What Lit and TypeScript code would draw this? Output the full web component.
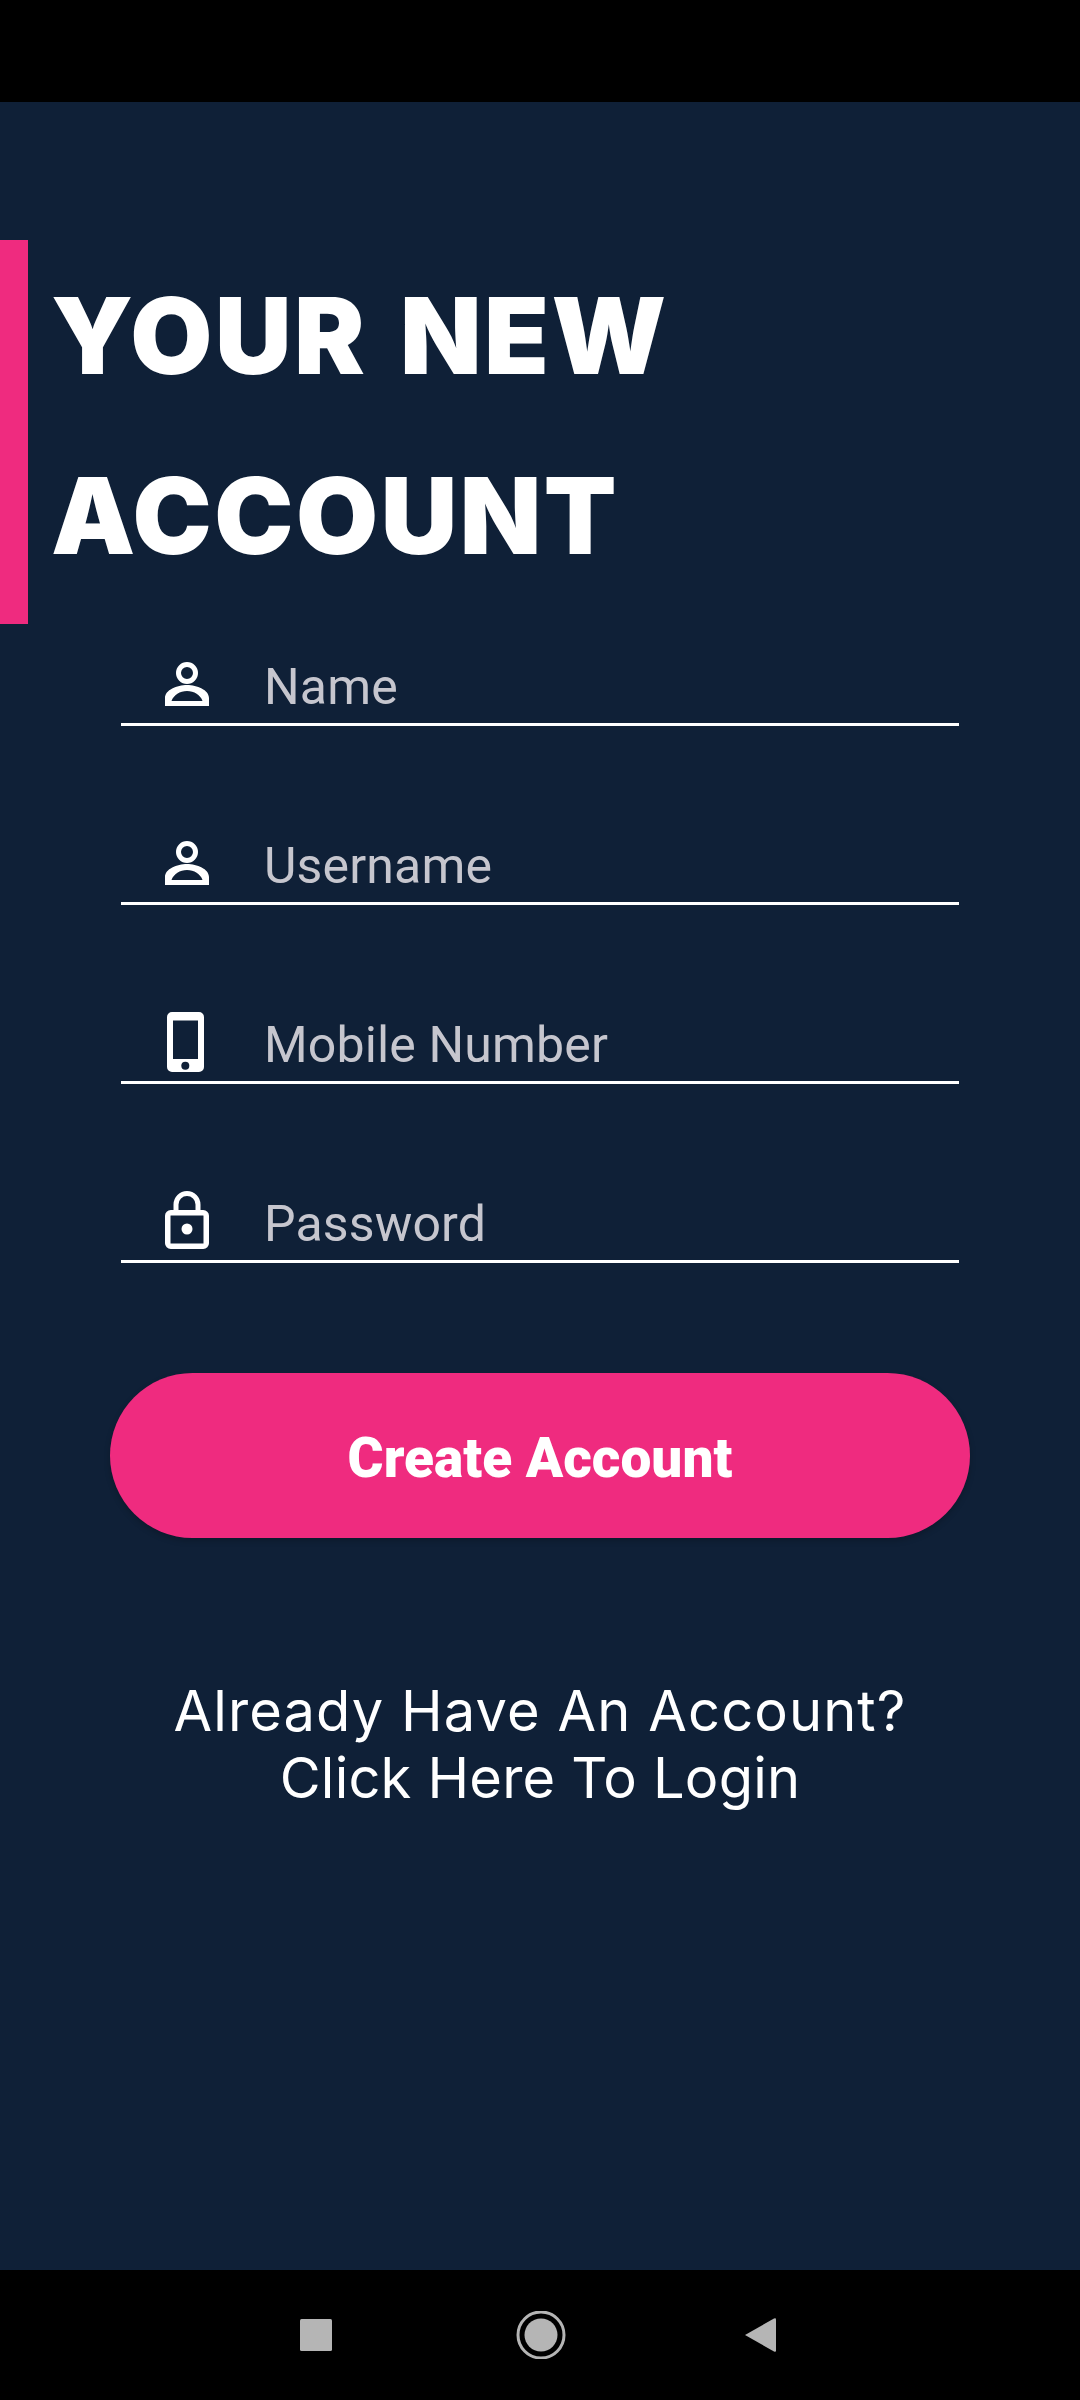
import { LitElement, html, css, svg } from "lit";
import { customElement } from "lit/decorators.js";

const personIcon = html`<svg class="icon" width="44" height="44" viewBox="0 0 44 44">
  <circle cx="22" cy="11" r="8.5" fill="none" stroke="#fff" stroke-width="5" />
  <path
    fill="#fff"
    fill-rule="evenodd"
    d="M0 44V36C0 28 12 23 22 23C32 23 44 28 44 36V44ZM6.500 39H37.500C35.500 33 29 29 22 29C15 29 8.500 33 6.500 39Z"
  />
</svg>`;

const phoneIcon = html`<svg class="icon" width="37" height="60" viewBox="0 0 37 60">
  <path
    fill="#fff"
    fill-rule="evenodd"
    d="M5 0H32A5 5 0 0 1 37 5V55A5 5 0 0 1 32 60H5A5 5 0 0 1 0 55V5A5 5 0 0 1 5 0ZM6 8.500V47H31V8.500Z"
  />
  <circle cx="18.300" cy="53.700" r="4" fill="#0f2037" />
</svg>`;

const lockIcon = html`<svg class="icon" width="44" height="58" viewBox="0 0 44 58">
  <path d="M11 20V13.500A11 11 0 0 1 33 13.500V20" fill="none" stroke="#fff" stroke-width="5" />
  <rect x="2.750" y="21.750" width="38.500" height="33.500" rx="3" fill="none" stroke="#fff" stroke-width="5.500" />
  <circle cx="22" cy="38" r="5.500" fill="#fff" />
</svg>`;

const navIcons = svg`
  <rect x="0" y="8" width="32" height="32" rx="1.500" fill="#b5b5b5" />
  <circle cx="241" cy="24" r="23" fill="none" stroke="#b5b5b5" stroke-width="3" />
  <circle cx="241" cy="24" r="16.500" fill="#b5b5b5" />
  <path d="M445 24L474 7.500Q476 6.500 476 8.500V39.500Q476 41.500 474 40.500Z" fill="#b5b5b5" />
`;

@customElement("app-root")
export class AppRoot extends LitElement {
  static styles = css`
    * {
      box-sizing: border-box;
    }

    :host {
      display: block;
    }

    .screen {
      display: flex;
      flex-direction: column;
      height: 2400px;
      background: #0f2037;
      font-family: Roboto, sans-serif;
    }

    .status-bar {
      height: 102px;
      background: #000;
    }

    main {
      flex: 1;
      padding-top: 138px;
    }

    .heading {
      height: 384px;
      margin: 0;
      padding: 6px 0 0 23px;
      border-left: 28px solid #ef2b7f;
      font-family: Inter, sans-serif;
      font-size: 106px;
      font-weight: 900;
      line-height: 180px;
      letter-spacing: 2.5px;
      word-spacing: 9px;
      color: #fff;
    }

    .fields {
      display: flex;
      flex-direction: column;
      gap: 94px;
      margin: 17px 121px 0;
    }

    .field {
      display: flex;
      align-items: flex-end;
      height: 85px;
      border-bottom: 3px solid #fff;
    }

    .icon-slot {
      display: flex;
      justify-content: center;
      flex: none;
      width: 132px;
    }

    .icon {
      display: block;
    }

    .field.person .icon-slot {
      padding-bottom: 17px;
    }

    .field.phone .icon-slot {
      padding: 0 3px 9px 0;
    }

    .field.lock .icon-slot {
      padding-bottom: 11px;
    }

    .label {
      padding: 0 0 8px 11px;
      font-size: 50px;
      line-height: 56px;
      letter-spacing: 0.15px;
      color: #c6c6ce;
    }

    .submit {
      display: block;
      width: 860px;
      height: 165px;
      margin: 110px 0 0 110px;
      padding: 4px 0 0;
      border: none;
      border-radius: 83px;
      background: #ef2b7f;
      box-shadow: 0 3px 6px rgba(0, 0, 0, 0.2);
      font-family: Roboto, sans-serif;
      font-size: 55px;
      font-weight: 900;
      color: #fff;
    }

    .login {
      margin: 140px 0 0;
      font-family: Inter, sans-serif;
      font-size: 56px;
      line-height: 67px;
      text-align: center;
      color: #fff;
    }

    .login span {
      display: block;
      letter-spacing: 1.1px;
    }

    .login span.second {
      letter-spacing: 0.2px;
    }

    .nav-bar {
      display: flex;
      align-items: center;
      height: 130px;
      padding-left: 300px;
      background: #000;
    }
  `;

  render() {
    return html`
      <div class="screen">
        <div class="status-bar"></div>
        <main>
          <h1 class="heading">YOUR NEW<br />ACCOUNT</h1>
          <div class="fields">
            <div class="field person">
              <div class="icon-slot">${personIcon}</div>
              <span class="label">Name</span>
            </div>
            <div class="field person">
              <div class="icon-slot">${personIcon}</div>
              <span class="label">Username</span>
            </div>
            <div class="field phone">
              <div class="icon-slot">${phoneIcon}</div>
              <span class="label">Mobile Number</span>
            </div>
            <div class="field lock">
              <div class="icon-slot">${lockIcon}</div>
              <span class="label">Password</span>
            </div>
          </div>
          <button class="submit">Create Account</button>
          <p class="login">
            <span>Already Have An Account?</span>
            <span class="second">Click Here To Login</span>
          </p>
        </main>
        <div class="nav-bar">
          <svg width="476" height="48" viewBox="0 0 476 48">${navIcons}</svg>
        </div>
      </div>
    `;
  }
}
